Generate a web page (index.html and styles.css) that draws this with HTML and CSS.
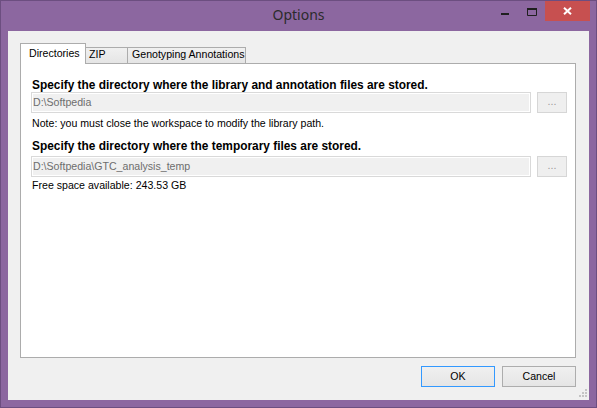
FILE: index.html
```html
<!DOCTYPE html>
<html lang="en">
<head>
<meta charset="utf-8">
<title>Options</title>
<link rel="stylesheet" href="styles.css">
</head>
<body>
<div class="window">
  <header class="titlebar">
    <span class="spacer"></span>
    <h1 class="title">Options</h1>
    <div class="controls">
      <button class="ctl ctl-min" aria-label="Minimize">
        <svg width="8" height="2" viewBox="0 0 8 2"><rect width="8" height="2" fill="#1f1f1f"/></svg>
      </button>
      <button class="ctl ctl-max" aria-label="Maximize">
        <svg width="10" height="8" viewBox="0 0 10 8"><path d="M0.5 1.5H9.5V7.5H0.5Z" fill="none" stroke="#1f1f1f"/><rect x="0" y="0" width="10" height="2" fill="#1f1f1f"/></svg>
      </button>
      <button class="ctl ctl-close" aria-label="Close">
        <svg width="9" height="8" viewBox="0 0 9 8"><path d="M1 0.8L8 7.2M8 0.8L1 7.2" stroke="#fff" stroke-width="2"/></svg>
      </button>
    </div>
  </header>
  <main class="client">
    <div class="tabctl">
      <div class="tabstrip">
        <div class="tab tab-active">Directories</div>
        <div class="tab tab-zip">ZIP</div>
        <div class="tab tab-geno">Genotyping Annotations</div>
      </div>
      <div class="panel">
        <p class="label label-first">Specify the directory where the library and annotation files are stored.</p>
        <div class="pathrow">
          <div class="field">D:\Softpedia</div>
          <button class="browse">...</button>
        </div>
        <p class="note">Note: you must close the workspace to modify the library path.</p>
        <p class="label label-second">Specify the directory where the temporary files are stored.</p>
        <div class="pathrow pathrow-second">
          <div class="field">D:\Softpedia\GTC_analysis_temp</div>
          <button class="browse">...</button>
        </div>
        <p class="note note-free">Free space available: 243.53 GB</p>
      </div>
    </div>
    <div class="footer">
      <button class="btn btn-default">OK</button>
      <button class="btn">Cancel</button>
    </div>
    <div class="grip">
      <svg width="9" height="9" viewBox="0 0 9 9" fill="#c4c4c4">
        <rect x="6" y="0" width="2" height="2"/>
        <rect x="3" y="3" width="2" height="2"/><rect x="6" y="3" width="2" height="2"/>
        <rect x="0" y="6" width="2" height="2"/><rect x="3" y="6" width="2" height="2"/><rect x="6" y="6" width="2" height="2"/>
      </svg>
    </div>
  </main>
</div>
</body>
</html>
```

FILE: styles.css
```css
* { box-sizing: border-box; }

html, body {
  margin: 0;
  padding: 0;
  background: #8c67a0;
}

.window {
  width: 597px;
  height: 408px;
  border: 1px solid #6c4e80;
  background: #8c67a0;
  padding: 0 7px 7px 7px;
  display: flex;
  flex-direction: column;
  font-family: "Liberation Sans", Arial, sans-serif;
  font-size: 10.6px;
  color: #000;
}

.titlebar {
  height: 30px;
  margin: 0 -7px;
  display: grid;
  grid-template-columns: 1fr auto 1fr;
  align-items: start;
}

.title {
  margin: 0;
  font-family: "Noto Sans", "Open Sans", sans-serif;
  font-weight: normal;
  font-size: 14px;
  line-height: 27px;
  padding-top: 3px;
  color: #2b2b2b;
  height: 30px;
  box-sizing: border-box;
  padding-top: 0;
  margin-top: 0;
  line-height: 27px;
  padding-bottom: 3px;
}

.controls {
  justify-self: end;
  display: flex;
  padding-right: 6px;
}

.ctl {
  border: none;
  margin: 0;
  padding: 0;
  height: 20px;
  background: transparent;
  display: flex;
  align-items: center;
  justify-content: center;
}
.ctl svg { display: block; }
.ctl-min { width: 26px; padding-top: 6px; }
.ctl-max { width: 27px; padding-top: 2px; }
.ctl-close { width: 45px; background: #c75050; }

.client {
  position: relative;
  flex: 1;
  background: #f0f0f0;
  padding: 12px 13px 0 12px;
  display: flex;
  flex-direction: column;
}

.tabctl {
  display: flex;
  flex-direction: column;
}

.tabstrip {
  height: 20px;
  display: flex;
  align-items: flex-end;
  position: relative;
  z-index: 1;
}

.tab {
  line-height: 13px;
  white-space: nowrap;
  border: 1px solid #acacac;
  border-bottom: none;
}

.tab-active {
  width: 66px;
  height: 21px;
  margin-bottom: -1px;
  background: #fff;
  padding: 3px 0 0 8px;
}

.tab-zip, .tab-geno {
  height: 16px;
  border-left: none;
  background: linear-gradient(#f0f0f0, #e5e5e5);
  padding: 0 0 0 3px;
}
.tab-zip { width: 42px; }
.tab-geno { width: 118px; padding-left: 4px; }

.panel {
  height: 295px;
  border: 1px solid #acacac;
  background: #fff;
  padding: 15px 8px 0 10px;
}

.label, .note {
  margin: 0;
  padding-left: 1px;
  line-height: 13px;
  white-space: nowrap;
}

.label {
  font-weight: bold;
  font-size: 11.9px;
}
.label-second { margin-top: 10px; }

.pathrow {
  display: flex;
  gap: 6px;
  height: 21px;
}
.pathrow-second { margin-top: 3px; }

.field {
  flex: 1;
  border: 1px solid #d9d9d9;
  box-shadow: inset 0 0 0 1px #fff;
  background: #f0f0f0;
  color: #6d6d6d;
  line-height: 19px;
  padding-left: 1px;
  white-space: nowrap;
}

.browse {
  width: 30px;
  height: 21px;
  margin: 0;
  padding: 0 0 3px;
  border: 1px solid #d6d6d6;
  background: #efefef;
  color: #9a9a9a;
  font-family: "Liberation Sans", Arial, sans-serif;
  font-size: 10.6px;
  line-height: 17px;
  text-align: center;
}

.note { margin-top: 4px; }
.note-free { margin-top: 2px; }

.footer {
  margin-top: 8px;
  display: flex;
  justify-content: flex-end;
  gap: 7px;
}

.btn {
  width: 74px;
  height: 21px;
  margin: 0;
  padding: 0;
  border: 1px solid #adadad;
  background: linear-gradient(#f0f0f0, #e5e5e5);
  font-family: "Liberation Sans", Arial, sans-serif;
  font-size: 10.6px;
  line-height: 19px;
  color: #000;
  text-align: center;
}
.btn-default { border-color: #3399ff; }

.grip {
  position: absolute;
  right: 0;
  bottom: 2px;
  width: 10px;
  height: 9px;
}
.grip svg { display: block; }
```
